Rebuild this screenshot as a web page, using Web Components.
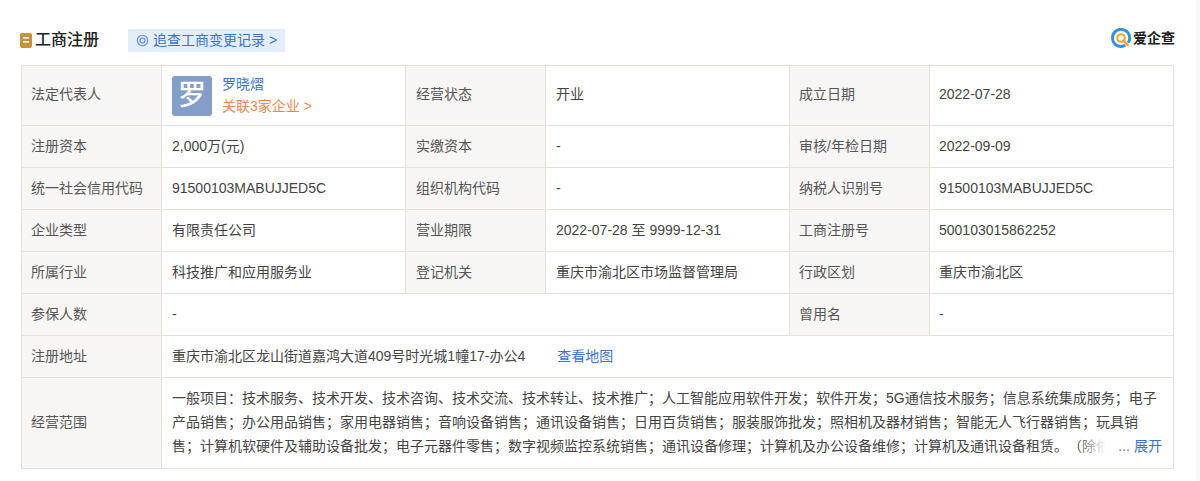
<!DOCTYPE html>
<html lang="zh-CN"><head><meta charset="utf-8"><style>
html,body{margin:0;padding:0;background:#fff}
body{width:1200px;height:481px;overflow:hidden;font:14px/20px "Liberation Sans","Noto Sans CJK SC",sans-serif;color:#333;text-spacing-trim:space-all;background:linear-gradient(to left,#fafaf8 4px,#fff 4px)}
</style></head><body>
<biz-panel>
  <biz-header></biz-header>
  <biz-grid>
    <biz-cell label first>法定代表人</biz-cell>
    <biz-cell first wide><biz-person name="罗晓熠" sub="关联3家企业 &gt;" glyph="罗"></biz-person></biz-cell>
    <biz-cell label first wide>经营状态</biz-cell><biz-cell first wide>开业</biz-cell>
    <biz-cell label first>成立日期</biz-cell><biz-cell first>2022-07-28</biz-cell>

    <biz-cell label>注册资本</biz-cell><biz-cell wide>2,000万(元)</biz-cell>
    <biz-cell label wide>实缴资本</biz-cell><biz-cell wide>-</biz-cell>
    <biz-cell label>审核/年检日期</biz-cell><biz-cell>2022-09-09</biz-cell>

    <biz-cell label>统一社会信用代码</biz-cell><biz-cell wide>91500103MABUJJED5C</biz-cell>
    <biz-cell label wide>组织机构代码</biz-cell><biz-cell wide>-</biz-cell>
    <biz-cell label>纳税人识别号</biz-cell><biz-cell>91500103MABUJJED5C</biz-cell>

    <biz-cell label>企业类型</biz-cell><biz-cell wide>有限责任公司</biz-cell>
    <biz-cell label wide>营业期限</biz-cell><biz-cell wide>2022-07-28 至 9999-12-31</biz-cell>
    <biz-cell label>工商注册号</biz-cell><biz-cell>500103015862252</biz-cell>

    <biz-cell label>所属行业</biz-cell><biz-cell wide>科技推广和应用服务业</biz-cell>
    <biz-cell label wide>登记机关</biz-cell><biz-cell wide>重庆市渝北区市场监督管理局</biz-cell>
    <biz-cell label>行政区划</biz-cell><biz-cell>重庆市渝北区</biz-cell>

    <biz-cell label>参保人数</biz-cell><biz-cell wide style="grid-column:2 / span 3">-</biz-cell>
    <biz-cell label>曾用名</biz-cell><biz-cell>-</biz-cell>

    <biz-cell label>注册地址</biz-cell>
    <biz-cell wide style="grid-column:2 / span 5"><biz-address link="查看地图">重庆市渝北区龙山街道嘉鸿大道409号时光城1幢17-办公4</biz-address></biz-cell>

    <biz-cell label>经营范围</biz-cell>
    <biz-cell wide style="grid-column:2 / span 5"><biz-scope>一般项目：技术服务、技术开发、技术咨询、技术交流、技术转让、技术推广；人工智能应用软件开发；软件开发；5G通信技术服务；信息系统集成服务；电子产品销售；办公用品销售；家用电器销售；音响设备销售；通讯设备销售；日用百货销售；服装服饰批发；照相机及器材销售；智能无人飞行器销售；玩具销售；计算机软硬件及辅助设备批发；电子元器件零售；数字视频监控系统销售；通讯设备修理；计算机及办公设备维修；计算机及通讯设备租赁。（除依</biz-scope></biz-cell>
  </biz-grid>
</biz-panel>
<script>
function def(name,html){
  customElements.define(name,class extends HTMLElement{
    connectedCallback(){
      if(this.shadowRoot)return;
      const r=this.attachShadow({mode:'open'});
      r.innerHTML=typeof html==='function'?html(this):html;
    }
  });
}
def('biz-panel',`<style>:host{display:block;padding:0 26px 0 21px;width:1153px}</style><slot></slot>`);
def('biz-header',`<style>
:host{display:flex;align-items:center;height:65px;box-sizing:border-box;padding-top:15px}
.mark{margin-right:4px;display:block;margin-left:-1px}
h2{margin:0 0 0 -1px;font-size:16px;font-weight:500;line-height:22px;color:#222;width:79px}
.track{display:flex;align-items:center;gap:4px;height:23px;padding:0 8px;margin-left:14px;background:#e3eefd;color:#3a72d6;font-size:14px;border-radius:1px}
.track span{white-space:nowrap}
.logo{margin-left:auto;display:flex;align-items:center;gap:2px;margin-right:-1px;margin-top:-4px;font-size:14px;font-weight:700;color:#222}
</style>
<svg class="mark" width="12" height="15" viewBox="0 0 12 15"><rect width="12" height="15" rx="2" fill="#c8913a"/><rect x="3" y="4" width="6" height="1.6" fill="#fff"/><rect x="3" y="8" width="6" height="1.6" fill="#fff"/></svg>
<h2>工商注册</h2>
<div class="track"><svg width="13" height="13" viewBox="0 0 13 13"><circle cx="6.5" cy="6.5" r="5.2" fill="none" stroke="#6d9be5" stroke-width="1.3"/><circle cx="6.5" cy="6.5" r="2.4" fill="none" stroke="#6d9be5" stroke-width="1.4"/></svg><span>追查工商变更记录 &gt;</span></div>
<div class="logo"><svg width="20" height="20" viewBox="0 0 21 21"><path d="M15.1 18.2A9 9 0 1 1 18 15.5" fill="none" stroke="#2f8fe8" stroke-width="3"/><circle cx="10.5" cy="10.5" r="4" fill="none" stroke="#f5a623" stroke-width="2.2"/><path d="M13 13l4.5 5" stroke="#f5a623" stroke-width="2.6" stroke-linecap="round"/></svg><span>爱企查</span></div>`);
def('biz-grid',`<style>:host{display:grid;grid-template-columns:140px 244px 140px 244px 140px 244px;grid-template-rows:60px 42px 42px 42px 42px 42px 42px 91px;box-sizing:border-box;border-top:1px solid #e8e0d4;border-left:1px solid #e8e0d4;width:1153px}</style><slot></slot>`);
def('biz-cell',`<style>
:host{display:flex;align-items:center;box-sizing:border-box;padding:0 9px 2px 9px;border-right:1px solid #e8e0d4;border-bottom:1px solid #e8e0d4;font-size:14px;color:#444;white-space:nowrap;min-width:0}
:host([wide]){padding-left:10px}
:host([first]){padding-bottom:4px}
:host([label]){background:#f7f6f5;color:#555}
</style><slot></slot>`);
def('biz-person',el=>`<style>
:host{display:flex;align-items:center;gap:10px;margin:4px 0 0 0}
.av{width:40px;height:40px;border-radius:3px;background:#839fc9;color:#fff;font-size:28px;font-weight:500;line-height:39px;text-align:center}
.n{color:#3a72d6;line-height:20px}.s{color:#f08550;line-height:24px}
.t{display:flex;flex-direction:column}
</style><div class="av">${el.getAttribute('glyph')}</div><div class="t"><span class="n">${el.getAttribute('name')}</span><span class="s">${el.getAttribute('sub')}</span></div>`);
def('biz-address',el=>`<style>:host{display:flex;gap:32px}.l{color:#3a72d6}</style><span><slot></slot></span><span class="l">${el.getAttribute('link')}</span>`);
def('biz-scope',`<style>
:host{display:block;position:relative;width:1000px;height:72px;line-height:24px;white-space:normal;overflow:hidden}
.more{position:absolute;right:2px;bottom:0;height:24px;display:flex;background:linear-gradient(90deg,rgba(255,255,255,0),#fff 30px);padding-left:42px;color:#777;gap:4px}
.more b{font-weight:400;color:#3a72d6}
</style><slot></slot><div class="more"><span>...</span><b>展开</b></div>`);
</script>
</body></html>
